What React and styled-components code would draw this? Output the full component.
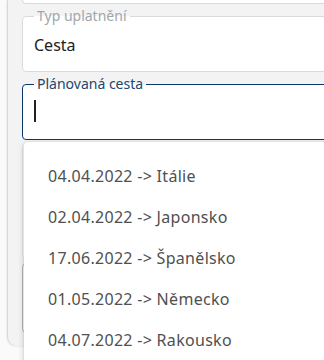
import React from "react";
import styled, { createGlobalStyle } from "styled-components";

const GlobalStyle = createGlobalStyle`
  html, body {
    margin: 0;
    padding: 0;
    background: #fafafa;
    overflow: hidden;
  }
  body {
    font-family: "Noto Sans", "Open Sans", sans-serif;
  }
`;

const Page = styled.div`
  height: 360px;
  padding-left: 8px;
  overflow: hidden;
`;

const Panel = styled.div`
  position: relative;
  width: 340px;
  height: 346px;
  box-sizing: border-box;
  padding-left: 14px;
  background: #f3f3f3;
  border-bottom-left-radius: 9px;
  box-shadow: -1px 0 2px rgba(0, 0, 0, 0.18);
  display: flex;
  flex-direction: column;
  gap: 3px;
`;

const TopStub = styled.div`
  height: 3px;
  background: #fff;
  border: 1px solid #dadada;
  border-top: none;
  border-bottom-left-radius: 4px;
`;

const Field = styled.fieldset`
  margin: 0;
  padding: 9px 11px 15px;
  background: #fff;
  border: 1px solid ${(p) => (p.$focused ? "#0b3868" : "#dadada")};
  border-radius: 4px;
  min-width: 0;
`;

const Legend = styled.legend`
  padding: 0 3px;
  font-size: 14px;
  line-height: 18px;
  color: ${(p) => (p.$focused ? "#22466e" : "#9ea6ae")};
`;

const Value = styled.div`
  height: 22px;
  line-height: 22px;
  font-size: 16px;
  color: #222;
  display: flex;
  align-items: center;
`;

const Caret = styled.span`
  display: block;
  width: 2px;
  height: 22px;
  margin-top: -4px;
  background: #222;
`;

const HiddenField = styled.fieldset`
  margin: 0;
  padding: 0 11px;
  height: 115px;
  background: #fff;
  border: 1px solid #e4e4e4;
  border-radius: 4px;
`;

const LowerBox = styled.div`
  height: 68px;
  background: #fff;
  border: 1px solid #b4b4b4;
  border-radius: 4px;
`;

const Dropdown = styled.ul`
  position: absolute;
  left: 16px;
  top: 142px;
  width: 330px;
  height: 240px;
  margin: 0;
  padding: 14px 0 0;
  list-style: none;
  background: #fff;
  border-radius: 4px;
  box-shadow: 0 2px 6px rgba(0, 0, 0, 0.2), 0 0 2px rgba(0, 0, 0, 0.1);
`;

const Option = styled.li`
  height: 41px;
  line-height: 41px;
  padding-left: 24px;
  font-size: 16px;
  letter-spacing: 0.3px;
  color: #505050;
  white-space: nowrap;
`;

const options = [
  "04.04.2022 -> Itálie",
  "02.04.2022 -> Japonsko",
  "17.06.2022 -> Španělsko",
  "01.05.2022 -> Německo",
  "04.07.2022 -> Rakousko",
];

export default function App() {
  return (
    <>
      <GlobalStyle />
      <Page>
        <Panel>
          <TopStub />
          <Field>
            <Legend>Typ uplatnění</Legend>
            <Value>Cesta</Value>
          </Field>
          <Field $focused>
            <Legend $focused>Plánovaná cesta</Legend>
            <Value>
              <Caret />
            </Value>
          </Field>
          <HiddenField />
          <LowerBox />
          <Dropdown>
            {options.map((o) => (
              <Option key={o}>{o}</Option>
            ))}
          </Dropdown>
        </Panel>
      </Page>
    </>
  );
}
